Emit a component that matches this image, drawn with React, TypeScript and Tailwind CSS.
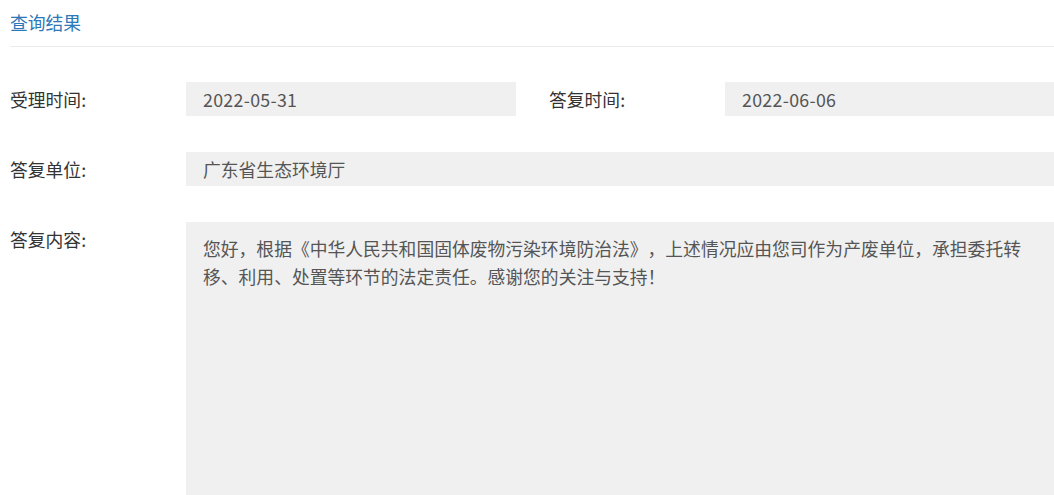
import React from 'react';

const font = { fontFamily: '"Microsoft YaHei", "Noto Sans CJK SC", "Noto Sans", sans-serif' };

const Label: React.FC<{ children: React.ReactNode }> = ({ children }) => (
  <div className="w-[176px] shrink-0 h-[34px] leading-[34px] text-[#333]">{children}</div>
);

const Field: React.FC<{ children: React.ReactNode; className?: string }> = ({ children, className }) => (
  <div className={'h-[34px] leading-[34px] bg-[#f0f0f0] pl-[17px] text-[#555] ' + (className ?? '')}>
    {children}
  </div>
);

export default function App() {
  return (
    <div
      className="bg-white h-[495px] overflow-hidden pl-[10px] text-[17.8px] [text-spacing-trim:space-all]"
      style={font}
    >
      {/* title */}
      <div className="h-[47px] flex items-center border-b border-[#ebebeb] text-[#2d78b8] pb-[1px]">
        查询结果
      </div>

      {/* dates */}
      <div className="flex mt-[35px]">
        <Label>受理时间:</Label>
        <Field className="w-[330px] shrink-0 tracking-[0.3px]">2022-05-31</Field>
        <div className="w-[33px] shrink-0" />
        <Label>答复时间:</Label>
        <Field className="flex-1 tracking-[0.3px]">2022-06-06</Field>
      </div>

      {/* unit */}
      <div className="flex mt-[36px]">
        <Label>答复单位:</Label>
        <Field className="flex-1">广东省生态环境厅</Field>
      </div>

      {/* content */}
      <div className="flex mt-[36px]">
        <Label>答复内容:</Label>
        <div className="flex-1 h-[300px] bg-[#f0f0f0] pl-[17px] pt-[12px]">
          <p className="max-w-[828px] leading-[28px] text-[#555]">
            您好，根据《中华人民共和国固体废物污染环境防治法》，上述情况应由您司作为产废单位，承担委托转移、利用、处置等环节的法定责任。感谢您的关注与支持！
          </p>
        </div>
      </div>
    </div>
  );
}
